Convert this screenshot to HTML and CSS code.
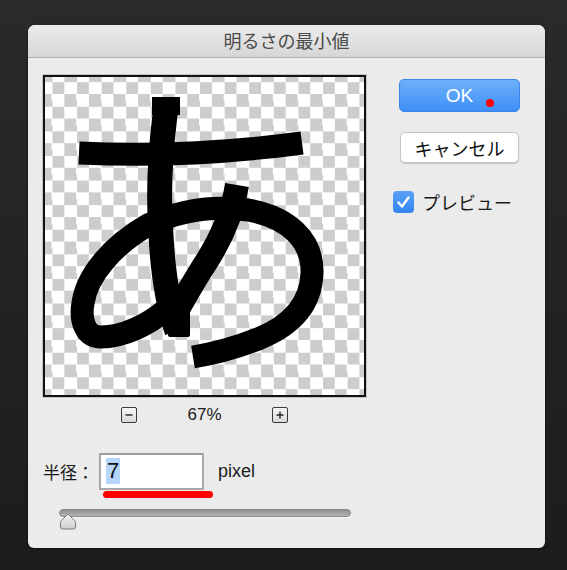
FILE: index.html
```html
<!DOCTYPE html>
<html lang="ja">
<head>
<meta charset="utf-8">
<title>明るさの最小値</title>
<link rel="stylesheet" href="styles.css">
</head>
<body>
<div class="dialog">
  <div class="titlebar">明るさの最小値</div>
  <div class="content">
    <div class="left">
      <div class="preview">
        <svg class="glyph" width="319" height="318" viewBox="2 2 319 318">
          <g fill="none" stroke="#000" stroke-linejoin="round">
            <path d="M36,78 C100,81 170,80 259,68" stroke-width="23"/>
            <path d="M123,24 L122,40 C117,80 115,120 118,160 C120,200 125,230 134,256" stroke-width="25"/>
            <path d="M194,110 C190,135 178,165 160,192 C150,208 140,225 132,240" stroke-width="24"/>
            <path d="M124,234 C105,250 80,262 58,262 C42,262 37,245 40,228 C44,200 70,170 105,150 C135,136 170,130 205,135 C245,142 270,165 269,198 C268,232 245,252 215,264 C195,272 175,278 150,282" stroke-width="23"/>
          </g>
          <rect x="109" y="22" width="28" height="18" fill="#000"/>
          <rect x="125" y="236" width="22" height="26" rx="2" fill="#000"/>
        </svg>
      </div>
      <div class="zoom-row">
        <span class="zbtn"><svg width="12" height="12" viewBox="0 0 12 12"><path d="M2.5,6 H9.5" stroke="#222" stroke-width="1.4"/></svg></span>
        <span class="zoom-val">67%</span>
        <span class="zbtn"><svg width="12" height="12" viewBox="0 0 12 12"><path d="M2.5,6 H9.5 M6,2.5 V9.5" stroke="#222" stroke-width="1.4"/></svg></span>
      </div>
      <div class="radius-row">
        <span class="label">半径：</span>
        <div class="input"><span class="sel">7</span></div>
        <span class="unit">pixel</span>
        <span class="annot"></span>
      </div>
      <div class="slider">
        <div class="track"></div>
        <svg class="thumb" width="18" height="17" viewBox="0 0 18 17">
          <defs>
            <linearGradient id="tg" x1="0" y1="0" x2="0" y2="1">
              <stop offset="0" stop-color="#f2f2f2"/>
              <stop offset="1" stop-color="#cfcfcf"/>
            </linearGradient>
          </defs>
          <path d="M9,1 L16.5,8.5 V14 Q16.5,16 14.5,16 H3.5 Q1.5,16 1.5,14 V8.5 Z" fill="url(#tg)" stroke="#7d7d7d" stroke-width="1"/>
        </svg>
      </div>
    </div>
    <div class="right">
      <button class="btn ok">OK<span class="dot"></span></button>
      <button class="btn cancel">キャンセル</button>
      <div class="check">
        <span class="box"><svg width="21" height="22" viewBox="0 0 21 22"><path d="M5.5,11.5 L9,15.5 L15.5,6.5" fill="none" stroke="#fff" stroke-width="2.4" stroke-linecap="round" stroke-linejoin="round"/></svg></span>
        <span class="check-label">プレビュー</span>
      </div>
    </div>
  </div>
</div>
</body>
</html>
```

FILE: styles.css
```css
html, body {
  margin: 0;
  padding: 0;
}
body {
  width: 567px;
  height: 570px;
  overflow: hidden;
  background: linear-gradient(#2a2a2a, #1c1c1c);
  font-family: "Liberation Sans", "Noto Sans CJK JP", sans-serif;
  padding-top: 25px;
  box-sizing: border-box;
}
.dialog {
  margin-left: 28px;
  width: 517px;
  height: 523px;
  background: #ebebeb;
  border-radius: 7px 7px 6px 6px;
  overflow: hidden;
  box-shadow: 0 1px 3px rgba(0, 0, 0, 0.5);
}
.titlebar {
  height: 32px;
  line-height: 34px;
  text-align: center;
  font-size: 18px;
  color: #4a4a4a;
  background: linear-gradient(#ececec, #d6d6d6);
  border-bottom: 1px solid #b4b4b4;
}
.content {
  display: flex;
  padding: 17px 0 0 15px;
}
.left {
  width: 323px;
  display: flex;
  flex-direction: column;
}
.preview {
  width: 323px;
  height: 322px;
  box-sizing: border-box;
  border: 2px solid #111;
  box-shadow: 0 0 0 1px #c4c4c4;
  background-color: #fff;
  background-image: repeating-conic-gradient(#ffffff 0 25%, #cdcdcd 0 50%);
  background-size: 24.6px 24.6px;
  background-position: -5.3px -7.6px;
}
.glyph {
  display: block;
}
.zoom-row {
  margin-top: 10px;
  height: 16px;
  display: flex;
  justify-content: center;
  align-items: center;
  gap: 50px;
}
.zbtn {
  width: 16px;
  height: 16px;
  box-sizing: border-box;
  border: 1.5px solid #3a3a3a;
  border-radius: 2px;
  background: linear-gradient(#f6f6f6, #d9d9d9);
  display: flex;
  align-items: center;
  justify-content: center;
}
.zbtn svg {
  display: block;
}
.zoom-val {
  font-size: 17px;
  line-height: 16px;
  color: #1a1a1a;
}
.radius-row {
  position: relative;
  margin-top: 30px;
  display: flex;
  align-items: center;
  height: 37px;
}
.label {
  font-size: 17px;
  color: #1a1a1a;
  width: 56px;
}
.input {
  width: 105px;
  height: 37px;
  box-sizing: border-box;
  border: 2px solid #a9a9a9;
  border-top-color: #9c9c9c;
  background: #fff;
  padding: 3px 0 0 5px;
}
.sel {
  display: inline-block;
  background: #b5d5fb;
  font-size: 22px;
  line-height: 26px;
  height: 26px;
  padding: 0 1px;
  color: #111;
}
.unit {
  margin-left: 14px;
  font-size: 18px;
  color: #1a1a1a;
}
.annot {
  position: absolute;
  left: 60px;
  top: 38px;
  width: 110px;
  height: 7px;
  border-radius: 4px;
  background: #ff0000;
}
.slider {
  position: relative;
  margin-top: 19px;
  margin-left: 16px;
  height: 20px;
}
.track {
  width: 292px;
  height: 8px;
  box-sizing: border-box;
  border-radius: 4px;
  background: linear-gradient(#8f8f8f, #b4b4b4);
  border: 1px solid #888;
  box-shadow: 0 1px 0 #fafafa;
}
.thumb {
  position: absolute;
  left: 0;
  top: 4px;
}
.right {
  margin-left: 33px;
  width: 121px;
  padding-top: 4px;
  display: flex;
  flex-direction: column;
  align-items: flex-start;
}
.btn {
  font-family: "Liberation Sans", "Noto Sans CJK JP", sans-serif;
  margin: 0;
  padding: 0;
  cursor: default;
}
.ok {
  position: relative;
  width: 121px;
  height: 33px;
  border-radius: 5px;
  border: 1px solid #3a84ec;
  background: linear-gradient(#6db1fb, #3e8ff6);
  color: #fff;
  font-size: 19px;
}
.dot {
  position: absolute;
  left: 86px;
  top: 19px;
  width: 8px;
  height: 8px;
  border-radius: 50%;
  background: #ff0000;
}
.cancel {
  margin-top: 20px;
  margin-left: 1px;
  width: 119px;
  height: 31px;
  border-radius: 5px;
  border: 1px solid #c6c6c6;
  background: #fff;
  box-shadow: 0 1px 1px rgba(0, 0, 0, 0.18);
  color: #111;
  font-size: 18px;
}
.check {
  margin-top: 26px;
  margin-left: -6px;
  display: flex;
  align-items: center;
  gap: 8px;
}
.box {
  width: 21px;
  height: 22px;
  border-radius: 4px;
  background: linear-gradient(#5aa0f7, #3484f0);
  display: block;
}
.box svg {
  display: block;
}
.check-label {
  font-size: 18px;
  color: #1a1a1a;
  white-space: nowrap;
}
```
